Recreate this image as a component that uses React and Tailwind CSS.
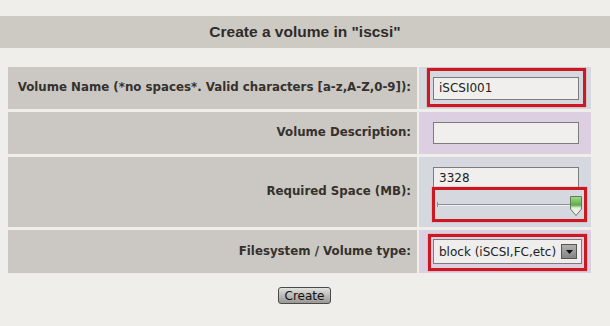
import React from "react";

const font = { fontFamily: '"DejaVu Sans", Verdana, sans-serif' };

function Label({ children }) {
  return (
    <div className="w-[409px] bg-[#cbc8c3] flex items-center justify-end pr-[6px] text-[11.8px] font-bold text-[#35312d]">
      {children}
    </div>
  );
}

function RedBox({ className }) {
  return (
    <div
      className={
        "absolute border-[3px] border-[#cc1820] shadow-[0_0_1px_#e05058] pointer-events-none " +
        className
      }
    />
  );
}

export default function App() {
  return (
    <div
      className="w-[610px] h-[326px] bg-[#efeeeb] pt-[16px] overflow-hidden"
      style={font}
    >
      <div
        className="h-[32px] bg-[#cdc9c3] flex items-center justify-center text-[15.5px] font-bold text-[#2f2b28]"
        style={{ fontFamily: '"Liberation Sans", Arial, sans-serif' }}
      >
        Create a volume in "iscsi"
      </div>

      <div className="ml-[8px] mt-[19px] w-[583px] flex flex-col gap-[3px]">
        {/* Row 1 */}
        <div className="flex h-[42px] gap-[2px]">
          <Label>Volume Name (*no spaces*. Valid characters [a-z,A-Z,0-9]):</Label>
          <div className="relative flex-1 bg-[#d5d9df] flex items-center pl-[14px]">
            <div className="w-[146px] h-[23px] border border-[#7c7c7c] bg-[#f0efed] flex items-center pl-[5px] text-[12px] text-[#222]">
              iSCSI001
            </div>
            <RedBox className="left-[8px] top-[1px] w-[159px] h-[39px]" />
          </div>
        </div>

        {/* Row 2 */}
        <div className="flex h-[42px] gap-[2px]">
          <Label>Volume Description:</Label>
          <div className="flex-1 bg-[#dccfe2] flex items-center pl-[14px]">
            <div className="w-[146px] h-[22px] border border-[#7c7c7c] bg-[#f0efed]" />
          </div>
        </div>

        {/* Row 3 */}
        <div className="flex h-[70px] gap-[2px]">
          <Label>Required Space (MB):</Label>
          <div className="relative flex-1 bg-[#d5d9df] flex flex-col pl-[14px] pt-[10px]">
            <div className="w-[146px] h-[22px] border border-[#7c7c7c] bg-[#f0efed] flex items-center pl-[5px] text-[12px] text-[#222]">
              3328
            </div>
            <div className="relative w-[146px] h-[30px] mt-[2px]">
              <div className="absolute left-[4px] top-[13px] w-[136px] h-[1px] bg-[#8a8e94]" />
              <div className="absolute left-[4px] top-[14px] w-[136px] h-[1px] bg-[#eef0f2]" />
              <div className="absolute left-[4px] top-[11px] w-[1px] h-[5px] bg-[#8a8e94]" />
              <svg
                className="absolute left-[136px] top-[4px]"
                width="14"
                height="22"
                viewBox="0 0 14 22"
              >
                <defs>
                  <linearGradient id="tg" x1="0" y1="0" x2="0" y2="1">
                    <stop offset="0" stopColor="#a7d98c" />
                    <stop offset="0.45" stopColor="#5faa48" />
                    <stop offset="0.6" stopColor="#e4eee0" />
                    <stop offset="1" stopColor="#f4f6f2" />
                  </linearGradient>
                </defs>
                <path
                  d="M1.5 1.5 H12.5 V14 L7 20.5 L1.5 14 Z"
                  fill="url(#tg)"
                  stroke="#5e7a58"
                  strokeWidth="1"
                />
              </svg>
            </div>
            <RedBox className="left-[13px] top-[30px] w-[155px] h-[35px]" />
          </div>
        </div>

        {/* Row 4 */}
        <div className="flex h-[43px] gap-[2px]">
          <Label>Filesystem / Volume type:</Label>
          <div className="relative flex-1 bg-[#dccfe2] flex items-center pl-[14px]">
            <div className="w-[149px] h-[25px] border border-[#7c7c7c] bg-[#efeeec] flex items-center justify-between pl-[5px] pr-[4px] text-[12px] text-[#222]">
              <span>block (iSCSI,FC,etc)</span>
              <div className="w-[16px] h-[15px] border border-[#555] bg-gradient-to-b from-[#b0b0b0] to-[#858585] flex items-center justify-center">
                <svg width="7" height="4" viewBox="0 0 7 4">
                  <path d="M0 0 H7 L3.5 4 Z" fill="#111" />
                </svg>
              </div>
            </div>
            <RedBox className="left-[9px] top-[4px] w-[159px] h-[37px]" />
          </div>
        </div>
      </div>

      <div className="flex justify-center mt-[14px] pr-[1px]">
        <button className="w-[53px] h-[17px] border border-[#4a4a4a] rounded-[3px] bg-gradient-to-b from-[#e2e0dc] to-[#9a9895] text-[12px] leading-none text-[#111] flex items-center justify-center">
          Create
        </button>
      </div>
    </div>
  );
}
